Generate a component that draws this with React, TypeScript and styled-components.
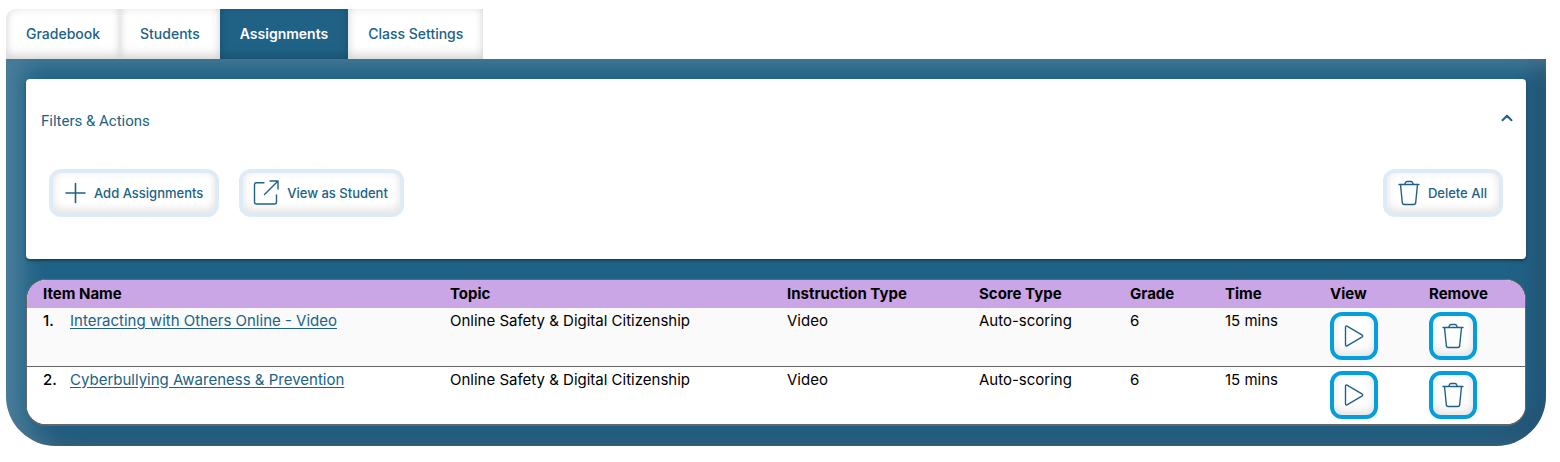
import React, { useState } from "react";
import styled, { createGlobalStyle, css } from "styled-components";

const blue = "#206286";
const uiFont = `Inter, "Noto Sans", sans-serif`;

const GlobalStyle = createGlobalStyle`
  *, *::before, *::after { box-sizing: border-box; }
  body {
    margin: 0;
    background: #fff;
    color: #000;
    font-family: ${uiFont};
    font-size: 14px;
    line-height: 20px;
  }
  button { font: inherit; cursor: pointer; }
`;

const Page = styled.main`
  padding: 9px 14px 16px 6px;
`;

const Tabs = styled.nav`
  display: flex;
`;

const Tab = styled.button<{ $active: boolean }>`
  height: 50px;
  padding: 0 20px;
  border: 0;
  color: ${blue};
  background: #fff;
  font-weight: 500;
  box-shadow: inset 0 -6px 8px rgba(0, 0, 0, 0.1), inset 0 0 10px rgba(0, 0, 0, 0.1);
  &:first-child { border-top-left-radius: 10px; }
  ${({ $active }) =>
    $active &&
    css`
      color: #fff;
      background: ${blue};
      font-weight: 600;
    `}
`;

const Panel = styled.section`
  padding: 20px;
  border-radius: 0 0 50px 50px;
  background: ${blue};
  box-shadow: inset 16px 6px 24px rgba(255, 255, 255, 0.2),
    inset -12px -10px 24px rgba(40, 60, 85, 0.4);
`;

const Card = styled.div`
  padding: 20px 23px 42px;
  border-radius: 4px;
  background: #fff;
  box-shadow: 0 2px 3px rgba(0, 0, 0, 0.35);
`;

const CardHeader = styled.button`
  display: flex;
  align-items: center;
  justify-content: space-between;
  width: calc(100% + 18px);
  height: 44px;
  margin: 0 -10px 26px -8px;
  padding: 0;
  border: 0;
  background: none;
  color: ${blue};
  font-family: Roboto, sans-serif;
  font-size: 15px;
`;

const Actions = styled.div`
  display: flex;
  gap: 20px;
`;

const ActionButton = styled.button<{ $end?: boolean }>`
  display: flex;
  align-items: center;
  gap: 6px;
  height: 48px;
  padding: 0 12px 0 9px;
  border: 4px solid #deeaf5;
  border-radius: 12px;
  background: #fff;
  color: ${blue};
  font-size: 13px;
  font-weight: 500;
  box-shadow: inset 0 -5px 8px rgba(0, 0, 0, 0.07), inset 0 0 8px rgba(0, 0, 0, 0.06);
  ${({ $end }) => $end && "margin-left: auto;"}
`;

const TableFrame = styled.div`
  margin: 20px 0 0;
  overflow: hidden;
  border: 1px solid #666;
  border-bottom-width: 2px;
  border-radius: 20px;
  background: #fff;
`;

const Table = styled.table`
  width: 100%;
  table-layout: fixed;
  border-collapse: collapse;
  font-size: 15px;
  line-height: 18px;
`;

const Col = styled.col<{ $width?: number }>`
  ${({ $width }) => $width && `width: ${$width}px;`}
`;

const HeadCell = styled.th`
  height: 28px;
  padding: 0 8px;
  background: #cba6e6;
  text-align: left;
  font-weight: 700;
  white-space: nowrap;
  &:first-child { padding-left: 16px; }
`;

const Row = styled.tr`
  & + & { border-top: 1px solid #666; }
  &:nth-child(odd) { background: #fafafa; }
  &:nth-child(even) { background: #fff; }
`;

const Cell = styled.td`
  height: 58px;
  padding: 4px 8px;
  vertical-align: top;
  white-space: nowrap;
  &:first-child { padding-left: 16px; }
`;

const ItemName = styled.div`
  display: flex;
`;

const ItemNumber = styled.span`
  width: 27px;
  font-weight: 500;
`;

const ItemLink = styled.a`
  color: ${blue};
  text-underline-offset: 2px;
`;

const IconButton = styled.button`
  display: flex;
  align-items: center;
  justify-content: center;
  width: 48px;
  height: 48px;
  padding: 0;
  border: 4px solid #049edd;
  border-radius: 12px;
  background: #fff;
  box-shadow: inset 0 -6px 8px rgba(0, 0, 0, 0.07), inset 0 0 8px rgba(0, 0, 0, 0.06);
`;

const Icon = styled.svg`
  display: block;
  flex: none;
  fill: none;
  stroke: ${blue};
  stroke-linecap: round;
  stroke-linejoin: round;
`;

const PlusIcon = () => (
  <Icon width="26" height="26" viewBox="0 0 26 26" strokeWidth="1.6" aria-hidden="true">
    <path d="M13.500 3.500v19M4 13h19" />
  </Icon>
);

const ExternalIcon = () => (
  <Icon width="29" height="30" viewBox="1 0 29 30" strokeWidth="1.4" aria-hidden="true">
    <path d="M13 4.700H5.500a2 2 0 0 0-2 2v17.300a2 2 0 0 0 2 2h18a2 2 0 0 0 2-2v-7M19 3h8v8M27 3 13.500 16.500" />
  </Icon>
);

const TrashIcon = () => (
  <Icon width="26" height="28" viewBox="1 0 26 28" strokeWidth="1.4" aria-hidden="true">
    <path d="M4 5.500h20M5.500 5.500 7.300 23.500a2 2 0 0 0 2 2h9.400a2 2 0 0 0 2-2l1.800-18M9.500 5.500l1-2a1.500 1.500 0 0 1 1.300-1h4.400a1.500 1.500 0 0 1 1.300 1l1 2" />
  </Icon>
);

const PlayIcon = () => (
  <Icon width="28" height="28" viewBox="0 0 28 28" strokeWidth="1.4" aria-hidden="true">
    <path d="M5.500 5v18a1 1 0 0 0 1.500.8l15.300-9a1 1 0 0 0 0-1.600L7 4.200A1 1 0 0 0 5.500 5z" />
  </Icon>
);

const ChevronIcon = ({ open }: { open: boolean }) => (
  <Icon width="12" height="14" viewBox="0 0 12 14" strokeWidth="2" aria-hidden="true">
    <path d={open ? "M1.500 6.300 6 1.800l4.500 4.500" : "M1.500 1.800 6 6.300l4.500-4.500"} />
  </Icon>
);

const tabs = ["Gradebook", "Students", "Assignments", "Class Settings"];

const columns: { label: string; width?: number }[] = [
  { label: "Item Name" },
  { label: "Topic", width: 337 },
  { label: "Instruction Type", width: 192 },
  { label: "Score Type", width: 151 },
  { label: "Grade", width: 95 },
  { label: "Time", width: 105 },
  { label: "View", width: 99 },
  { label: "Remove", width: 104 },
];

const items = [
  "Interacting with Others Online - Video",
  "Cyberbullying Awareness & Prevention",
].map((name) => ({
  name,
  topic: "Online Safety & Digital Citizenship",
  instruction: "Video",
  score: "Auto-scoring",
  grade: "6",
  time: "15 mins",
}));

export default function App() {
  const [active, setActive] = useState("Assignments");
  const [open, setOpen] = useState(true);

  return (
    <>
      <GlobalStyle />
      <Page>
        <Tabs>
          {tabs.map((tab) => (
            <Tab key={tab} type="button" $active={tab === active} onClick={() => setActive(tab)}>
              {tab}
            </Tab>
          ))}
        </Tabs>
        <Panel>
          <Card>
            <CardHeader type="button" aria-expanded={open} onClick={() => setOpen(!open)}>
              Filters &amp; Actions
              <ChevronIcon open={open} />
            </CardHeader>
            {open && (
              <Actions>
                <ActionButton type="button"><PlusIcon />Add Assignments</ActionButton>
                <ActionButton type="button"><ExternalIcon />View as Student</ActionButton>
                <ActionButton type="button" $end><TrashIcon />Delete All</ActionButton>
              </Actions>
            )}
          </Card>
          <TableFrame>
            <Table>
              <colgroup>
                {columns.map((c) => <Col key={c.label} $width={c.width} />)}
              </colgroup>
              <thead>
                <tr>
                  {columns.map((c) => <HeadCell key={c.label} scope="col">{c.label}</HeadCell>)}
                </tr>
              </thead>
              <tbody>
                {items.map((item, i) => (
                  <Row key={item.name}>
                    <Cell>
                      <ItemName>
                        <ItemNumber>{i + 1}.</ItemNumber>
                        <ItemLink href="#">{item.name}</ItemLink>
                      </ItemName>
                    </Cell>
                    <Cell>{item.topic}</Cell>
                    <Cell>{item.instruction}</Cell>
                    <Cell>{item.score}</Cell>
                    <Cell>{item.grade}</Cell>
                    <Cell>{item.time}</Cell>
                    <Cell>
                      <IconButton type="button" aria-label={`View ${item.name}`}><PlayIcon /></IconButton>
                    </Cell>
                    <Cell>
                      <IconButton type="button" aria-label={`Remove ${item.name}`}><TrashIcon /></IconButton>
                    </Cell>
                  </Row>
                ))}
              </tbody>
            </Table>
          </TableFrame>
        </Panel>
      </Page>
    </>
  );
}
